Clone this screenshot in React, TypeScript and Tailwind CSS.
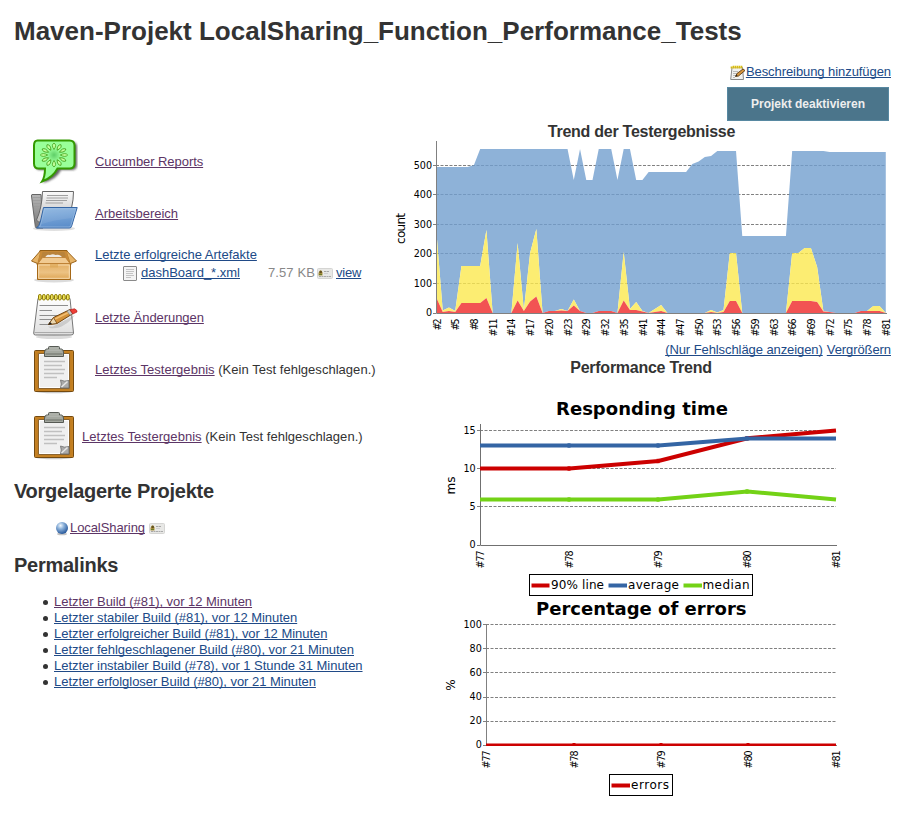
import React from "react";

const BLUE = "text-[#204a87]";
const PURPLE = "text-[#5c3566]";

function Link({ children, visited = false }: { children: React.ReactNode; visited?: boolean }) {
  return (
    <a href="#" className={`underline underline-offset-[1px] decoration-1 [text-decoration-skip-ink:none] whitespace-nowrap ${visited ? PURPLE : BLUE}`}>
      {children}
    </a>
  );
}

/* ---------- icons ---------- */

function CucumberIcon() {
  const seeds = Array.from({ length: 12 }, (_, i) => i * 30);
  return (
    <svg width="48" height="48" viewBox="0 0 48 48" className="block shrink-0">
      <defs>
        <filter id="soft" x="-20%" y="-20%" width="150%" height="150%">
          <feGaussianBlur stdDeviation="1.1" />
        </filter>
        <radialGradient id="cuke">
          <stop offset="0" stopColor="#5fce68" />
          <stop offset="1" stopColor="#99ff99" />
        </radialGradient>
      </defs>
      <path d="M9 4H42Q47 4 47 9V27Q47 32 42 32H31Q27 41 13 45Q16 40 16 32H9Q5 31 5 27V9Q5 4 9 4Z" fill="#333" opacity=".75" filter="url(#soft)" />
      <path d="M7.500 2.500H39.500Q44.500 2.500 44.500 7.500V25.500Q44.500 30.500 39.500 30.500H27.500Q23 39.500 12 43.500Q15 39 15 30.500H8.500Q4 30.500 4 25.500V7.500Q4 2.500 7.500 2.500Z" fill="#99ff99" stroke="#339900" strokeWidth="2" />
      <circle cx="24" cy="17" r="7" fill="url(#cuke)" />
      <g transform="translate(24 17) scale(1.14 1)">
        {seeds.map((a) => (
          <path key={a} d="M0 -5.500Q-2.800 -10 0 -12Q2.800 -10 0 -5.500Z" transform={`rotate(${a})`} fill="#c4ff9c" stroke="#3a9a14" strokeWidth=".7" />
        ))}
      </g>
    </svg>
  );
}

function FolderIcon() {
  return (
    <svg width="48" height="48" viewBox="0 0 48 48" className="block shrink-0">
      <defs>
        <linearGradient id="fold" x1="0" y1="0" x2="0.200" y2="1">
          <stop offset="0" stopColor="#8db6e1" />
          <stop offset="1" stopColor="#5d8fcb" />
        </linearGradient>
        <linearGradient id="page" x1="0" y1="0" x2="0" y2="1">
          <stop offset="0" stopColor="#fafafa" />
          <stop offset="1" stopColor="#bdbdbd" />
        </linearGradient>
        <linearGradient id="back" x1="0" y1="0" x2="0" y2="1">
          <stop offset="0" stopColor="#b6b6b6" />
          <stop offset="1" stopColor="#777" />
        </linearGradient>
      </defs>
      <ellipse cx="24" cy="38.500" rx="21" ry="2.600" fill="#999" opacity=".3" />
      <path d="M2 4.500H11L13 38H7Q5.500 38 5.300 36.500L1.500 6Q1.400 4.500 2 4.500Z" fill="url(#back)" stroke="#666" />
      <path d="M2.500 7.500H10M3 10.500H11M3.500 13.500H11M4 16.500H11" stroke="#9b9b9b" strokeWidth=".8" />
      <path d="M12.500 1.500H43.500Q43.500 10 41.500 18L38.500 32H8.500L6.500 30Q12 18 12.500 1.500Z" fill="url(#page)" stroke="#666" />
      <path d="M17 5.500H38M16.500 8H38M16 10.500H37M15.500 13H33" stroke="#a0a0a0" strokeWidth="1" />
      <path d="M13.500 17.500H47.200L41.500 36.500Q41 38 39.500 38H6.500Q9.500 36 10.500 31Z" fill="url(#fold)" stroke="#3465a4" />
      <path d="M14.500 18.700H45.800L40.700 36Q40.300 37 39 37H9.500Q11 34.500 11.700 31Z" fill="none" stroke="#abc8e8" strokeWidth=".8" opacity=".7" />
      <path d="M14.500 19H45L42 28Q23 30 12 34Z" fill="#fff" opacity=".08" />
    </svg>
  );
}

function BoxIcon() {
  return (
    <svg width="48" height="48" viewBox="0 0 48 48" className="block shrink-0">
      <defs>
        <linearGradient id="carton" x1="0" y1="0" x2="0" y2="1">
          <stop offset="0" stopColor="#e3ae62" />
          <stop offset="0.550" stopColor="#ecc283" />
          <stop offset="1" stopColor="#dda452" />
        </linearGradient>
      </defs>
      <ellipse cx="24" cy="38" rx="20" ry="2.500" fill="#999" opacity=".35" />
      <path d="M10 8.500H37L41 22.500H7Z" fill="#c98a37" stroke="#945f16" />
      <path d="M12.500 10H34.500L37 20H10Z" fill="#b9833b" />
      <path d="M15 16.500Q16 12 20 13Q23 11.500 25.500 13Q31 12 32.500 16.500Z" fill="#eeeae3" />
      <path d="M10.500 8.700L1.500 19L7.500 21.500M36.500 8.700L46.500 19L40.500 21.500" fill="#e7b467" stroke="#9c641b" />
      <path d="M7.500 21.500H40.500V37.500H7.500Z" fill="url(#carton)" stroke="#a56817" />
      <path d="M8 21.500L12.500 15.500H35.500L40 21.500Z" fill="#f1ca91" stroke="#bb7c2e" strokeWidth=".8" />
      <path d="M8.700 23H39.300V36.300H8.700Z" fill="none" stroke="#f8dfb6" strokeWidth=".9" />
      <path d="M20 22V25.500H28V22" fill="#dba653" opacity=".65" />
    </svg>
  );
}

function NotepadIcon() {
  return (
    <svg width="48" height="48" viewBox="0 0 48 48" className="block shrink-0">
      <defs>
        <linearGradient id="pad" x1="0" y1="0" x2="0" y2="1">
          <stop offset="0" stopColor="#fefefe" />
          <stop offset="1" stopColor="#dedede" />
        </linearGradient>
      </defs>
      <ellipse cx="24" cy="43" rx="18" ry="2" fill="#999" opacity=".35" />
      <path d="M8 4.500H40L43.500 39Q43.600 41 41 41H5.500Q3.500 41 3.700 39Z" fill="url(#pad)" stroke="#777" />
      <path d="M4.500 38.500H43" stroke="#aaa" />
      <path d="M9.500 11.500H38M9.500 16.500H22M9.500 21.500H31M9.500 25.500H25M9.500 30.500H22" stroke="#8e8e8e" strokeWidth="1" />
      {Array.from({ length: 8 }, (_, i) => (
        <rect key={i} x={8.5 + i * 4} y="0.500" width="2.700" height="5.500" rx="1.300" fill="#f0e45c" stroke="#8d7a00" strokeWidth="1" />
      ))}
      <path d="M18 32.500H23L45 21Q40 28 34 31Q28 35 20 34Z" fill="#777" opacity=".25" />
      <path d="M18.500 30.500L23.500 23.500L40 15.500L43 19.500L27 29.500Z" fill="#d49239" stroke="#744610" strokeWidth="1" />
      <path d="M18.500 30.500L23.500 23.500L27 29.500Z" fill="#ead6ae" stroke="#744610" strokeWidth=".8" />
      <path d="M18.300 30.800L20 28L22 30Z" fill="#222" />
      <path d="M25 25L39.500 18" stroke="#f2bd70" strokeWidth="1.500" />
      <path d="M37 17L39.500 15.800L42.500 19.500L40 21.200Z" fill="#c9cdca" stroke="#777" strokeWidth=".6" />
      <path d="M40 15.700L44.500 14.800Q47.500 16 47 18L42.800 20Z" fill="#ef3f36" stroke="#b02020" strokeWidth=".7" />
    </svg>
  );
}

function ClipboardIcon() {
  return (
    <svg width="48" height="48" viewBox="0 0 48 48" className="block shrink-0">
      <ellipse cx="24" cy="45.500" rx="18" ry="1.800" fill="#888" opacity=".45" />
      <rect x="4.500" y="4.500" width="39" height="41" rx="1" fill="#c17d20" stroke="#744a10" />
      <rect x="5.800" y="5.800" width="36.400" height="38.400" fill="none" stroke="#c98529" strokeWidth=".8" />
      <path d="M8.500 7.500H39.500V42.500H8.500Z" fill="#f0f0f0" stroke="#8b6430" />
      <path d="M9.500 8.500H38.500V41.500H9.500Z" fill="none" stroke="#fff" />
      <path d="M14 15.500H35M14 19.500H32M14 23.500H35M14 27.500H34M14 31.500H27" stroke="#c0c0c0" strokeWidth="1.600" />
      <path d="M39 34.500V42H30.500Q32 38 30.500 34Q34 36 39 34.500Z" fill="#aaa" stroke="#6c6c6c" strokeWidth=".8" />
      <path d="M37.500 35.500L31.500 41" stroke="#e7e7e7" strokeWidth="1.500" />
      <path d="M18.500 3V1.500Q18.500 .5 19.500 .5H28.500Q29.500 .5 29.500 1.500V3H31.500Q33 3 33.500 6V10.500H14.500V6Q15 3 16.500 3Z" fill="#a4a8a0" stroke="#565a54" />
      <path d="M15.500 8H32.500" stroke="#7f837b" strokeWidth="1.500" />
      <path d="M19.500 2H28.500M17 4.200H31" stroke="#b7bab4" />
    </svg>
  );
}

function FileIcon() {
  return (
    <svg width="14" height="15" viewBox="0 0 14 15" className="block shrink-0">
      <rect x=".5" y=".5" width="13" height="14" rx=".5" fill="#f4f4f4" stroke="#8a8a8a" />
      <path d="M3 3.500H11M3 5.500H11M3 7.500H10M3 9.500H11M3 11.500H8" stroke="#c4c4c4" />
    </svg>
  );
}

function CardIcon() {
  return (
    <svg width="16" height="11" viewBox="0 0 16 11" className="block shrink-0">
      <rect x=".5" y=".5" width="15" height="10" rx="1" fill="#e8e8e6" stroke="#d5d5d3" />
      <path d="M1.500 7.500V5Q3.500 0 5.500 4.500V7.500Z" fill="#ab9240" />
      <circle cx="3.700" cy="4" r="1.300" fill="#63501e" />
      <path d="M2 7V6H5V7Z" fill="#6b7b28" />
      <path d="M7 3.500H9.500M10 3.500H12" stroke="#a7a7a7" />
      <path d="M7 5.500H11" stroke="#d0d0d0" />
      <path d="M2 8.500H14" stroke="#aaa" strokeDasharray="2 .5" />
    </svg>
  );
}

function SmallNotepad() {
  return (
    <svg width="16" height="16" viewBox="0 0 16 16" className="block shrink-0">
      <path d="M2 2.500H12.500L13.500 14.500H.7Z" fill="#f1f1ef" stroke="#888" />
      <path d="M3 6.500H8M3 8.500H7M3 10.500H6M3 12.500H5" stroke="#bbb" />
      <path d="M1.500 3.500V1.500M3.500 3.500V.8M5.500 3.500V.8M7.500 3.500V.8M9.500 3.500V.8M11.500 3.500V.8" stroke="#d3b71c" strokeWidth="1.700" />
      <path d="M2.500 2.500V1M4.500 2.500V1M6.500 2.500V1M8.500 2.500V1M10.500 2.500V1" stroke="#f2e36a" />
      <path d="M5.500 11.500L7 8.500L13 4L15 5.500L8.500 11Z" fill="#d6943c" stroke="#5d3b14" strokeWidth=".9" />
      <path d="M5.500 11.500L6.200 9.500L7.500 10.800Z" fill="#222" />
    </svg>
  );
}

function BallIcon() {
  return (
    <svg width="14" height="15" viewBox="0 0 14 15" className="block shrink-0">
      <defs>
        <radialGradient id="ball" cx=".38" cy=".3" r=".7">
          <stop offset="0" stopColor="#f2f8fd" />
          <stop offset=".4" stopColor="#8db2da" />
          <stop offset="1" stopColor="#28599c" />
        </radialGradient>
      </defs>
      <ellipse cx="7" cy="13" rx="5" ry="1.300" fill="#888" opacity=".5" />
      <circle cx="7" cy="7" r="6" fill="url(#ball)" />
    </svg>
  );
}

/* ---------- charts ---------- */

const CHART_FONT = "font-['DejaVu_Sans',sans-serif]";

function Label({ x, y, children, w, size = 9.6, anchor = "start", bold = false }: {
  x: number; y: number; children: string; w?: number; size?: number; anchor?: "start" | "middle" | "end"; bold?: boolean;
}) {
  return (
    <text x={x} y={y} fontSize={size} textAnchor={anchor} fontWeight={bold ? 700 : 400} textLength={w}>
      {children}
    </text>
  );
}

function Vertical({ x, y, children, w, size = 9.6, anchor = "end" }: {
  x: number; y: number; children: string; w?: number; size?: number; anchor?: "middle" | "end";
}) {
  return (
    <text transform={`translate(${x} ${y}) rotate(-90)`} fontSize={size} textAnchor={anchor} textLength={w}>
      {children}
    </text>
  );
}

function Grid({ x1, x2, ys }: { x1: number; x2: number; ys: number[] }) {
  return (
    <>
      {ys.map((y) => (
        <g key={y}>
          <line x1={x1} x2={x2} y1={y} y2={y} stroke="#808080" strokeDasharray="3 1.5" />
          <line x1={x1 - 3} x2={x1} y1={y} y2={y} stroke="#808080" />
        </g>
      ))}
    </>
  );
}

type Pt = [number, number];

// Breakpoints as [build index, height above the axis in px]
const totals: Pt[] = [
  [0, 146], [5, 146], [6, 148], [7, 164], [21, 164], [22, 133], [23, 164], [24, 133], [25, 133], [26, 164], [28, 164],
  [29, 133], [30, 164], [31, 164], [32, 133], [33, 133], [34, 141], [40, 141], [41, 149], [42, 151.5], [43, 156],
  [44, 157], [45, 162], [48, 162], [49, 77], [56, 77], [57, 162], [62, 162], [63, 161], [72, 161],
];
const skipped: Pt[] = [
  [0, 80], [1, 2.5], [2, 5.5], [3, 2], [4, 47], [7, 47], [8, 83], [9, 0], [12, 0], [13, 70], [14, 3], [15, 60],
  [16, 84], [17, 0], [18, 2], [19, 2], [20, 4], [21, 2], [22, 13.5], [23, 2], [24, 0], [25, 0], [26, 2], [28, 2],
  [29, 0], [30, 61], [31, 4], [32, 11], [33, 2], [34, 0], [35, 4], [36, 8], [37, 0], [43, 0], [44, 3], [45, 0.5],
  [46, 3], [47, 60], [48, 60], [49, 0], [56, 0], [57, 60], [58, 60], [59, 65], [60, 65], [61, 46], [62, 2], [63, 1],
  [64, 0], [67, 0], [68, 2], [69, 2], [70, 7], [71, 7], [72, 0],
];
const failed: Pt[] = [
  [0, 15], [1, 1], [2, 2], [3, 1], [4, 10], [7, 10], [8, 15], [9, 0], [12, 0], [13, 12.5], [14, 2], [15, 11.5],
  [16, 16.5], [17, 0], [18, 2], [19, 2], [20, 2.5], [21, 2], [22, 7.5], [23, 2], [24, 0], [25, 0], [26, 2], [28, 2],
  [29, 0], [30, 12.5], [31, 3], [32, 3], [33, 1.5], [34, 0], [35, 1], [36, 2], [37, 0], [43, 0], [44, 1], [45, 0],
  [46, 1], [47, 12], [48, 12], [49, 0], [56, 0], [57, 12], [60, 12], [61, 11], [62, 1.5], [63, 1], [64, 0], [67, 0],
  [68, 2], [71, 2], [72, 0],
];

const outline = (p: Pt[]) => p.map(([i, h]) => `${(436.5 + i * 6.24).toFixed(2)},${313 - h}`);
const band = (upper: Pt[], lower: Pt[]) => [...outline(upper), ...outline(lower).reverse()].join(" ");
const axis: Pt[] = [[0, 0], [72, 0]];

const builds = [2, 5, 8, 11, 14, 17, 20, 23, 29, 32, 35, 41, 44, 47, 50, 53, 56, 59, 63, 66, 69, 72, 75, 78, 81];

function TestTrend() {
  const ys = [165.5, 194.5, 224.5, 253.5, 283.5];
  return (
    <svg width="510" height="201" viewBox="390 141 510 201" className={`block ${CHART_FONT}`}>
      <Grid x1={436} x2={886} ys={ys} />
      <g opacity=".8">
        <polygon points={band(totals, skipped)} fill="#729fcf" />
        <polygon points={band(skipped, failed)} fill="#fce94f" />
        <polygon points={band(failed, axis)} fill="#ef2929" />
      </g>
      <path d="M436.500 141V313.500H887M433 313.500H436" fill="none" stroke="#808080" />
      {["500", "400", "300", "200", "100", "0"].map((t, i) => (
        <Label key={t} x={432} y={[169, 198, 228, 257, 287, 316][i]} anchor="end">{t}</Label>
      ))}
      <Vertical x={404.5} y={228.5} size={12} anchor="middle" w={31}>count</Vertical>
      {builds.map((b, i) => (
        <Vertical key={b} x={440.6 + i * 18.72} y={318.5} w={b < 10 ? 12 : 18}>{`#${b}`}</Vertical>
      ))}
    </svg>
  );
}

function Series({ points, color }: { points: Pt[]; color: string }) {
  return (
    <g>
      <polyline points={points.join(" ")} fill="none" stroke={color} strokeWidth="4" />
      {points.slice(1, -1).map(([x, y]) => (
        <rect key={x} x={x - 2} y={y - 2.2} width="3" height="4.400" fill={color} />
      ))}
    </g>
  );
}

function RespondingTime() {
  const ys = [430.5, 468.5, 506.5];
  const xs = [480.5, 569.5, 658.5, 747.5, 836];
  return (
    <svg width="510" height="208" viewBox="390 390 510 208" className={`block ${CHART_FONT}`}>
      <Label x={556} y={415} size={18} bold w={172}>Responding time</Label>
      <Grid x1={480} x2={836} ys={ys} />
      <path d="M480.500 424V545.500H837M477 545.500H480" fill="none" stroke="#707070" />
      <Series color="#cc0000" points={[[480, 468.5], [569.5, 468.5], [658.5, 461], [747.5, 438.3], [836, 430.5]]} />
      <Series color="#3465a4" points={[[480, 445.5], [569.5, 445.5], [658.5, 445.5], [747.5, 438.4], [836, 438.4]]} />
      <Series color="#73d216" points={[[480, 499.5], [569.5, 499.5], [658.5, 499.5], [747.5, 491.5], [836, 499.5]]} />
      {["15", "10", "5", "0"].map((t, i) => (
        <Label key={t} x={475.7} y={[434, 472, 510, 548][i]} anchor="end">{t}</Label>
      ))}
      <Vertical x={455} y={485.5} size={12} anchor="middle">ms</Vertical>
      {xs.map((x, i) => (
        <Vertical key={x} x={x + 3.7} y={550.5} w={18}>{`#${77 + i}`}</Vertical>
      ))}
      <rect x="529.500" y="574.500" width="223" height="21" fill="#fff" stroke="#000" />
      <path d="M531.500 585.500H549.500" stroke="#cc0000" strokeWidth="4" />
      <Label x={551} y={589} size={12} w={53}>90% line</Label>
      <path d="M608.500 585.500H627" stroke="#3465a4" strokeWidth="4" />
      <Label x={628} y={589} size={12} w={51}>average</Label>
      <path d="M683.500 585.500H702" stroke="#73d216" strokeWidth="4" />
      <Label x={702.5} y={589} size={12} w={47}>median</Label>
    </svg>
  );
}

function ErrorPercentage() {
  const ys = [624.5, 648.5, 672.5, 697.5, 721.5];
  const xs = [486.5, 574.5, 661.5, 748.5, 836];
  return (
    <svg width="510" height="202" viewBox="390 598 510 202" className={`block ${CHART_FONT}`}>
      <Label x={536} y={615} size={18} bold w={210.5}>Percentage of errors</Label>
      <Grid x1={486} x2={836} ys={ys} />
      <path d="M486.500 624V745.500H837M483 745.500H486" fill="none" stroke="#808080" />
      <rect x="486" y="743.500" width="350" height="2.500" fill="#cc0000" />
      {xs.slice(1, -1).map((x) => (
        <rect key={x} x={x - 2} y="743" width="3" height="2" fill="#cc0000" />
      ))}
      {["100", "80", "60", "40", "20", "0"].map((t, i) => (
        <Label key={t} x={481.8} y={[628, 652, 676, 700, 724, 748][i]} anchor="end">{t}</Label>
      ))}
      <Vertical x={455} y={685} size={12} anchor="middle">%</Vertical>
      {xs.map((x, i) => (
        <Vertical key={x} x={x + 3.7} y={750.5} w={18}>{`#${77 + i}`}</Vertical>
      ))}
      <rect x="609.500" y="774.500" width="63" height="21" fill="#fff" stroke="#000" />
      <path d="M611.500 785.500H630" stroke="#cc0000" strokeWidth="4" />
      <Label x={631} y={789} size={12} w={38}>errors</Label>
    </svg>
  );
}

/* ---------- page ---------- */

function Row({ icon, children }: { icon: React.ReactNode; children: React.ReactNode }) {
  return (
    <div className="flex h-13 items-center pt-0.5">
      {icon}
      <div className="ml-[17px]">{children}</div>
    </div>
  );
}

const permalinks = [
  "Letzter Build (#81), vor 12 Minuten",
  "Letzter stabiler Build (#81), vor 12 Minuten",
  "Letzter erfolgreicher Build (#81), vor 12 Minuten",
  "Letzter fehlgeschlagener Build (#80), vor 21 Minuten",
  "Letzter instabiler Build (#78), vor 1 Stunde 31 Minuten",
  "Letzter erfolgloser Build (#80), vor 21 Minuten",
];

export default function App() {
  return (
    <div className="h-[815px] w-[912px] overflow-hidden bg-white font-['Liberation_Sans',Arial,sans-serif] text-[13px] leading-4 text-[#333]">
      <h1 className="h-16 pt-4 pl-3.5 text-[26px] leading-[30px] font-bold whitespace-nowrap">
        Maven-Projekt LocalSharing_Function_Performance_Tests
      </h1>
      <div className="flex">
        <main className="w-[390px] shrink-0 pt-[71px]">
          <div className="pl-[30px]">
            <Row icon={<CucumberIcon />}><span className="tracking-[-0.06px]"><Link visited>Cucumber Reports</Link></span></Row>
            <Row icon={<FolderIcon />}><Link visited>Arbeitsbereich</Link></Row>
            <Row icon={<BoxIcon />}>
              <div className="-mt-1">
                <Link>Letzte erfolgreiche Artefakte</Link>
                <div className="mt-0.5 flex items-center pl-7">
                  <FileIcon />
                  <span className="ml-1 w-[127px]"><Link>dashBoard_*.xml</Link></span>
                  <span className="w-[49px] whitespace-nowrap tracking-[0.1px] text-[#888]">7.57 KB</span>
                  <CardIcon />
                  <span className="ml-[3px] tracking-[-0.2px]"><Link>view</Link></span>
                </div>
              </div>
            </Row>
            <Row icon={<NotepadIcon />}><span className="tracking-[-0.06px]"><Link visited>Letzte Änderungen</Link></span></Row>
            <Row icon={<ClipboardIcon />}>
              <span className="tracking-[0.03px]"><Link visited>Letztes Testergebnis</Link> (Kein Test fehlgeschlagen.)</span>
            </Row>
            <div className="mt-[17px] flex h-12 items-center">
              <ClipboardIcon />
              <div className="mt-0.5 ml-1 tracking-[0.03px]"><Link visited>Letztes Testergebnis</Link> (Kein Test fehlgeschlagen.)</div>
            </div>
          </div>
          <h2 className="mt-[19px] pl-3.5 text-[20px] leading-6 font-bold tracking-[-0.26px]">Vorgelagerte Projekte</h2>
          <div className="mt-[17px] flex items-center pl-[55px]">
            <BallIcon />
            <span className="ml-px tracking-[-0.08px]"><Link visited>LocalSharing</Link></span>
            <span className="ml-1"><CardIcon /></span>
          </div>
          <h2 className="mt-[17px] pl-3.5 text-[20px] leading-6 font-bold tracking-[-0.26px]">Permalinks</h2>
          <ul className="mt-[17px] tracking-[-0.04px]">
            {permalinks.map((p, i) => (
              <li key={p} className="flex items-center pl-[43px]">
                <span className="mt-px mr-1.5 size-[5px] rounded-full bg-[#333]" />
                <Link visited={i === 0}>{p}</Link>
              </li>
            ))}
          </ul>
        </main>
        <aside className="w-[522px] shrink-0">
          <div className="flex h-[23px] items-start justify-end pr-[21px] tracking-[-0.07px]">
            <span className="mt-px"><SmallNotepad /></span>
            <Link>Beschreibung hinzufügen</Link>
          </div>
          <div className="flex justify-end pr-[23px]">
            <button className="h-[34px] w-[162px] border border-[#5788a1] bg-[#4b758b] text-[12px] font-bold text-[#eee]">
              Projekt deaktivieren
            </button>
          </div>
          <h3 className="h-5 pr-[19px] pt-px text-center text-[16px] leading-5 font-bold tracking-[-0.26px]">Trend der Testergebnisse</h3>
          <TestTrend />
          <div className="flex h-4 justify-end gap-1 pr-[21px] tracking-[-0.08px]">
            <Link>(Nur Fehlschläge anzeigen)</Link>
            <Link>Vergrößern</Link>
          </div>
          <h3 className="h-8 pr-[20px] pt-px text-center text-[16px] leading-[18px] font-bold tracking-[-0.26px]">Performance Trend</h3>
          <RespondingTime />
          <ErrorPercentage />
        </aside>
      </div>
    </div>
  );
}
